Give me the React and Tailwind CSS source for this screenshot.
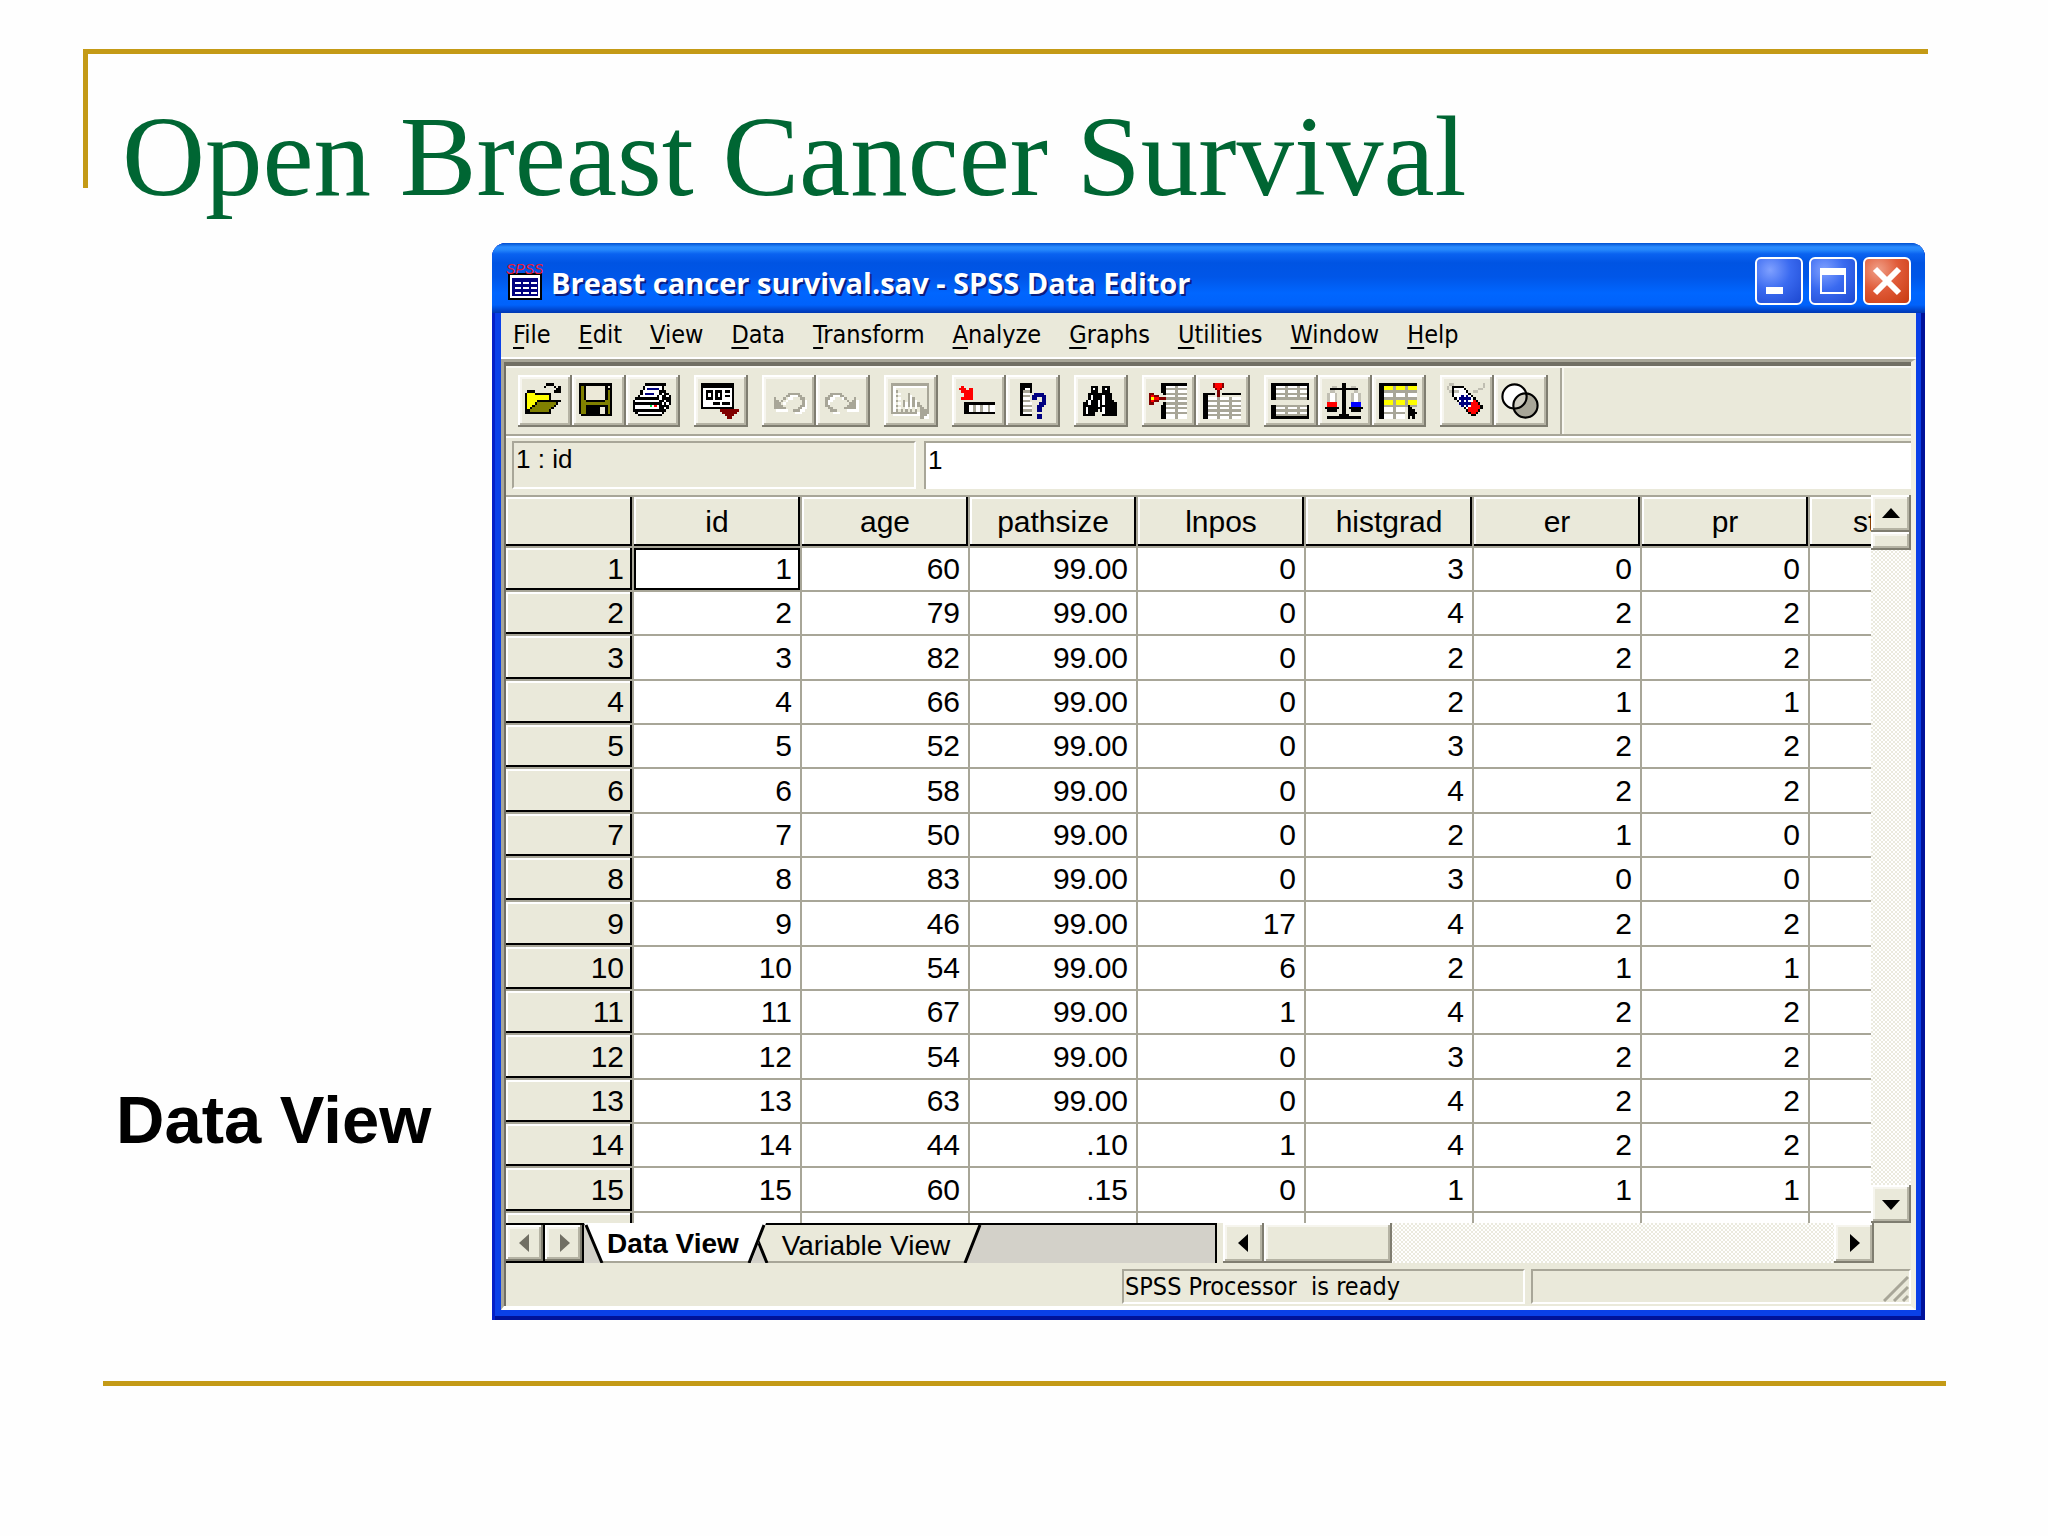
import { clsx } from 'clsx';

const COLORS = {
    K: '#000000',
    W: '#ffffff',
    L: '#ece9d8',
    Y: '#ffff00',
    O: '#808000',
    G: '#a8a698',
    g: '#c0beb2',
    B: '#000080',
    b: '#0000ff',
    R: '#ff0000',
    M: '#800000',
    N: '#00e050',
};

const OPEN = [
    '.........KKK....',
    '........K...K.K.',
    '.............KK.',
    '.KKK........KKK.',
    'KYYYKKKKKKK.....',
    'KYYYYYYYYYK.....',
    'KYYYYYYYYYK.....',
    'KYYYYKKKKKKKKKK.',
    'KYYYKOOOOOOOOK..',
    'KYYKOOOOOOOOK...',
    'KYKOOOOOOOOK....',
    'KKOOOOOOOOK.....',
    'KKKKKKKKKKK.....',
];

const SAVE = [
    'KKKKKKKKKKKKKK',
    'KOKLLLLLLLLKLK',
    'KOKLLLLLLLLKKK',
    'KOKLLLLLLLLKOK',
    'KOKLLLLLLLLKOK',
    'KOKLLLLLLLLKOK',
    'KOKLLLLLLLLKOK',
    'KOOKKKKKKKKOOK',
    'KOOOOOOOOOOOOK',
    'KOOKKKKKKKKKOK',
    'KOOKKKKKKLLKOK',
    'KOOKKKKKKLLKOK',
    'KOOKKKKKKLLKOK',
    '.KKKKKKKKKKKKK',
];

const PRINT = [
    '.....KKKKKKKKK..',
    '....KWWWWWWWK...',
    '....KWBBBBBWK...',
    '...KWWWWWWWKKK..',
    '...KWBBBBWWKWKK.',
    '..KWWWWWWWKWKKWK',
    '.KKKKKKKKKKWKKKK',
    'KWWWWWWWWWWKKWKK',
    'KKKKKKKKKKKKWKWK',
    'KWWWWWWNWRWKKKK.',
    'KWWWWWWWWWWKKWK.',
    'KKKKKKKKKKKKKK..',
    '.KWWWWWWWWWWK...',
    '..KKKKKKKKKK....',
];

const DIALOG = [
    'KKKKKKKKKKKKKK..',
    'KKKKKKKKKKKKKK..',
    'KWWWWWWWWWWWWK..',
    'KWKKKWKKKWKKWK..',
    'KWKWKWKWKWWWWK..',
    'KWKWKWKWKWKKWK..',
    'KWKKKWKKKWWWWK..',
    'KWWWWWWWWWWWWK..',
    'KWWWWKKKWKKKWK..',
    'KWWWWWWWWWWWWK..',
    'KKKKKKKKKKKKKK..',
    '........MMMMMMMM',
    '.........MMMMMM.',
    '..........MMMM..',
    '...........MM...',
];

const UNDO = [
    '................',
    '................',
    '................',
    '................',
    '........GGGGG...',
    '.......GG...GG..',
    '..G...G......GG.',
    '..GG.G........G.',
    '..GGG.........G.',
    '..GGGG.......GG.',
    '..GGGGG.....GG..',
    '..........GGG...',
];

const REDO = UNDO.map((row) => row.padEnd(16, '.').split('').reverse().join(''));

const CHART = [
    'GGGGGGGGGGGGGGGG',
    'G..............G',
    'G..............G',
    'G.G............G',
    'G......G.......G',
    'G.G....G.......G',
    'G......G.G.....G',
    'G.G..G.G.G.....G',
    'G....G.G.G.G...G',
    'G.G..G.G.G.GG..G',
    'G...........GG.G',
    'G.G.G.G.G.G.GGGG',
    'GGGGGGGGGGG.GGGG',
    '............GGG.',
    '............GG..',
];

const GOTO_CASE = [
    '................',
    '.R..............',
    'RRR.RR..........',
    '.RRRRR..........',
    '..RRRR..........',
    '..RRRR..........',
    '.RRRRR..........',
    '................',
    '..KKKKKKKKKKKKK.',
    '..KKWWGWWGWWGWW.',
    '..KKWWGWWGWWGWW.',
    '..KKWWGWWGWWGWW.',
    '..KKKKKKKKKKKKK.',
];

const VARIABLES = [
    '...KKKKK........',
    '...KKKKK........',
    '...KKWWK........',
    '...KGGGK........',
    '...KWWW..BBBB...',
    '...KGGG.BBBBBB..',
    '...KWWW.BB..BB..',
    '...KGGG.....BB..',
    '...KWWWW...BBB..',
    '...KGGGG..BBB...',
    '...KWWWW..BB....',
    '...KGGGG..BB....',
    '...KWWWW........',
    '...KKKKK..BB....',
    '..........BB....',
];

const FIND = [
    '................',
    '....KKK..KKK....',
    '....KWK..KWK....',
    '....KKK..KKK....',
    '...KKKKKKKKKK...',
    '...KWKKKKWKKK...',
    '...KWKKKKWKKK...',
    '..KWKKKWKWKKKK..',
    '.KKWKKKWKWKKKKK.',
    '.KKKKKKWKKKKKKK.',
    '.KWKKKKKKWKKKKK.',
    '.KWKKKK.KWKKKKK.',
    '.KWKKK...WKKKKK.',
    '.KKKKK...KKKKKK.',
];

const INSERT_CASE = [
    '.....KKKKKKKKKKK',
    '.....KKWWWWGWWWW',
    '.....KKGGGGGGGGG',
    '.....KKWWWWGWWWW',
    'MM....KGGGGGGGGG',
    'MRMM...WWWWGWWWW',
    'MYRRMMMGGGGGGGGG',
    'MRMM...WWWWGWWWW',
    'MM....KGGGGGGGGG',
    '.....KKWWWWGWWWW',
    '.....KKGGGGGGGGG',
    '.....KKWWWWGWWWW',
    '.....KKGGGGGGGGG',
    '.....KKWWWWGWWWW',
    '.....KKWWWWGWWWW',
];

const INSERT_VARIABLE = [
    '....MRRRM.......',
    '....MRRRM.......',
    '.....MRM........',
    '......M.........',
    'KKKKK.M.KKKKKKKK',
    'KK....M.........',
    'KKWWWWGWWWWGWWWW',
    'KKGGGGGGGGGGGGGG',
    'KKWWWWGWWWWGWWWW',
    'KKGGGGGGGGGGGGGG',
    'KKWWWWGWWWWGWWWW',
    'KKGGGGGGGGGGGGGG',
    'KKWWWWGWWWWGWWWW',
    'KKGGGGGGGGGGGGGG',
    'KKWWWWGWWWWGWWWW',
];

const SPLIT = [
    'KKKKKKKKKKKKKKKK',
    'KKWWWWGWWWWGWWWK',
    'KKGGGGGGGGGGGGGK',
    'KKWWWWGWWWWGWWWK',
    'KKGGGGGGGGGGGGGK',
    'KKWWWWGWWWWGWWWK',
    'KKGGGGGGGGGGGGGK',
    '................',
    '................',
    'KKGGGGGGGGGGGGGK',
    'KKWWWWGWWWWGWWWK',
    'KKGGGGGGGGGGGGGK',
    'KKWWWWGWWWWGWWWK',
    'KKGGGGGGGGGGGGGK',
    'KKKKKKKKKKKKKKKK',
];

const WEIGHT = [
    '.......KK.......',
    '...gg..KK..gg...',
    '..KKKKKKKKKKKK..',
    '..gg...KK...gg..',
    '.gWWg..KK..gWWg.',
    '.gWWg..KK..gWWg.',
    '.gWWg..KK..gWWg.',
    '.gWWg..KK..gWWg.',
    '.RRRR..KK..bbbb.',
    '.RRRR..KK..bbbb.',
    'KKKKKK.KK.KKKKKK',
    '.KKKK..KK..KKKK.',
    '.......KK.......',
    '......KKKK......',
    '.KKKKKKKKKKKKKK.',
];

const SELECT = [
    'KKKKKKKKKKKKKKKK',
    'KKYYYYGYYYYGYYYY',
    'KKYYYYGYYYYGYYYY',
    'KKGGGGGGGGGGGGGG',
    'KKWWWWGWWWWGWWWW',
    'KKWWWWGWWWWGWWWW',
    'KKGGGGGGGGGGGGGG',
    'KKYYYYGYYYYGYYYY',
    'KKYYYYGYYYYGYYYY',
    'KKGGGGGGGGGGKGGG',
    'KKWWWWGWWWW.KK..',
    'KKWWWWGWWWW.KKK.',
    'KKGGGGGGGGG.KKKK',
    'KKWWWWGWWWW.KKK.',
    'KKWWWWGWWWW.K.K.',
];

const LABELS = [
    '.gg............g',
    'g.KKKKK........g',
    'g.KWWWWK.....gg.',
    '.gKggWWWK..gg...',
    '..KWWWWWWK......',
    '..KWWWBWBWK.....',
    '...KWBBBBBWK....',
    '....KWBWBWWRK...',
    '.....BBBBBRRRK..',
    '......BWBWRRRRK.',
    '.......KWRRRRRK.',
    '........KRRRRK..',
    '.........KRRK...',
    '..........KK....',
];

const Pixels = ({ rows, fill }) =>
    rows.flatMap((row, y) =>
        [...row.matchAll(/([^.])\1*/g)].map((run) => (
            <rect key={`${y}-${run.index}`} x={run.index} y={y} width={run[0].length} height={1} fill={fill || COLORS[run[1]]} />
        ))
    );

const PixelIcon = ({ rows, disabled }) => (
    <svg viewBox="0 0 16 15" className="w-[38px] h-9" shapeRendering="crispEdges" aria-hidden="true">
        {disabled && (
            <g transform="translate(1 1)">
                <Pixels rows={rows} fill="#ffffff" />
            </g>
        )}
        <Pixels rows={rows} />
    </svg>
);

const SetsIcon = () => (
    <svg viewBox="0 0 16 15" className="w-[38px] h-9" aria-hidden="true">
        <defs>
            <clipPath id="first-set">
                <circle cx="5.7" cy="5.6" r="5.1" />
            </clipPath>
        </defs>
        <circle cx="5.7" cy="5.6" r="5.1" fill="#ffffff" />
        <circle cx="10.3" cy="9.4" r="5.1" fill="#a8a698" />
        <circle cx="10.3" cy="9.4" r="5.1" fill="#cfcdc2" clipPath="url(#first-set)" />
        <circle cx="5.7" cy="5.6" r="5.1" fill="none" stroke="#000000" strokeWidth="0.9" />
        <circle cx="10.3" cy="9.4" r="5.1" fill="none" stroke="#000000" strokeWidth="0.9" />
    </svg>
);

const AppIcon = () => (
    <svg viewBox="0 0 37 37" className="w-[37px] h-[37px]" aria-hidden="true">
        <rect x="2" y="10" width="34" height="27" fill="#000000" />
        <rect x="4" y="12" width="30" height="23" fill="#ffffff" />
        <rect x="6" y="15" width="26" height="18" fill="#000080" />
        {[19, 24, 29].map((y) =>
            [9, 17, 25].map((x) => <rect key={`${x}-${y}`} x={x} y={y} width="6" height="2" fill="#ffffff" />)
        )}
        <text x="0" y="11" fontSize="14" fontStyle="italic" fontFamily="Liberation Sans, sans-serif" fill="#f01830">SPSS</text>
    </svg>
);

const TOOLBAR = [
    [
        { label: 'Open File', rows: OPEN },
        { label: 'Save File', rows: SAVE },
        { label: 'Print', rows: PRINT },
    ],
    [{ label: 'Dialog Recall', rows: DIALOG }],
    [
        { label: 'Undo', rows: UNDO, disabled: true },
        { label: 'Redo', rows: REDO, disabled: true },
    ],
    [{ label: 'Goto Chart', rows: CHART, disabled: true }],
    [
        { label: 'Goto Case', rows: GOTO_CASE },
        { label: 'Variables', rows: VARIABLES },
    ],
    [{ label: 'Find', rows: FIND }],
    [
        { label: 'Insert Cases', rows: INSERT_CASE },
        { label: 'Insert Variable', rows: INSERT_VARIABLE },
    ],
    [
        { label: 'Split File', rows: SPLIT },
        { label: 'Weight Cases', rows: WEIGHT },
        { label: 'Select Cases', rows: SELECT },
    ],
    [
        { label: 'Value Labels', rows: LABELS },
        { label: 'Use Sets' },
    ],
];

const MENUS = ['File', 'Edit', 'View', 'Data', 'Transform', 'Analyze', 'Graphs', 'Utilities', 'Window', 'Help'];

const COLUMNS = ['id', 'age', 'pathsize', 'lnpos', 'histgrad', 'er', 'pr', 'status'];

const CASES = [
    [1, 60, '99.00', 0, 3, 0, 0, 0],
    [2, 79, '99.00', 0, 4, 2, 2, 0],
    [3, 82, '99.00', 0, 2, 2, 2, 0],
    [4, 66, '99.00', 0, 2, 1, 1, 0],
    [5, 52, '99.00', 0, 3, 2, 2, 0],
    [6, 58, '99.00', 0, 4, 2, 2, 0],
    [7, 50, '99.00', 0, 2, 1, 0, 0],
    [8, 83, '99.00', 0, 3, 0, 0, 0],
    [9, 46, '99.00', 17, 4, 2, 2, 0],
    [10, 54, '99.00', 6, 2, 1, 1, 0],
    [11, 67, '99.00', 1, 4, 2, 2, 0],
    [12, 54, '99.00', 0, 3, 2, 2, 0],
    [13, 63, '99.00', 0, 4, 2, 2, 0],
    [14, 44, '.10', 1, 4, 2, 2, 0],
    [15, 60, '.15', 0, 1, 1, 1, 0],
    [16, 48, '.20', 0, 1, 2, 2, 0],
];

const raised = 'bg-[#eae9da] shadow-[inset_-2px_-2px_#7f7d70,inset_2px_2px_#ffffff,inset_-4px_-4px_#b5b3a4,inset_4px_4px_#f6f5ee]';
const headerCell = 'bg-[#eae9da] border-r-2 border-b-2 border-[#a8a698] font-normal shadow-[inset_-2px_-2px_#000000,inset_2px_2px_#ffffff]';
const sunken = 'border-2 border-t-[#a8a698] border-l-[#a8a698] border-b-white border-r-white';
const track = 'bg-[repeating-conic-gradient(#ffffff_0_25%,#ebeade_0_50%)] bg-[length:4px_4px]';
const captionButton = 'w-12 h-12 rounded-md border-2 border-white flex items-center justify-center';

const TitleBar = () => (
    <div className="h-[70px] rounded-t-[14px] pt-[6px] pl-[14px] pr-[14px] flex items-center gap-2 bg-[linear-gradient(to_bottom,#0050d0_0px,#2b8cff_4px,#2486fb_7px,#0a62f0_11px,#0054e3_20px,#0056e8_34px,#0066ff_50px,#0062fb_62px,#0040c4_68px,#0038b0_70px)]">
        <AppIcon />
        <h2 className="flex-1 pt-1 font-['Open_Sans',sans-serif] font-bold text-[29px] leading-10 text-white [text-shadow:2px_2px_#0a1e80]">
            Breast cancer survival.sav - SPSS Data Editor
        </h2>
        <div className="flex gap-[6px]">
            <button aria-label="Minimize" className={clsx(captionButton, 'bg-[radial-gradient(circle_at_30%_25%,#7fa0ff,#3a6af0_45%,#1c48d0)]')}>
                <svg viewBox="0 0 44 44" className="w-11 h-11"><rect x="9" y="28" width="17" height="7" fill="#ffffff" /></svg>
            </button>
            <button aria-label="Maximize" className={clsx(captionButton, 'bg-[radial-gradient(circle_at_30%_25%,#7fa0ff,#3a6af0_45%,#1c48d0)]')}>
                <svg viewBox="0 0 44 44" className="w-11 h-11">
                    <path d="M9 9h26v26H9zM11 16v17h22V16z" fill="#ffffff" fillRule="evenodd" />
                </svg>
            </button>
            <button aria-label="Close" className={clsx(captionButton, 'bg-[radial-gradient(circle_at_30%_25%,#f0a088,#e05a38_45%,#c83a10)]')}>
                <svg viewBox="0 0 44 44" className="w-11 h-11"><path d="M10 10L34 34M34 10L10 34" stroke="#ffffff" strokeWidth="6" /></svg>
            </button>
        </div>
    </div>
);

const MenuBar = () => (
    <nav className="h-11 pl-[5px] flex items-center">
        {MENUS.map((menu) => (
            <button key={menu} className="px-[14px] first:pl-[7px] leading-8">
                <span className="underline decoration-2 underline-offset-4">{menu[0]}</span>
                {menu.slice(1)}
            </button>
        ))}
    </nav>
);

const Toolbar = () => (
    <div className="flex border-t-2 border-t-[#f8f7f0] border-b-2 border-b-[#a8a698]">
        <div className="flex gap-[14px] pl-3 pr-3 py-[7px] border-r-2 border-[#a8a698]">
            {TOOLBAR.map((group) => (
                <div key={group[0].label} className="flex">
                    {group.map(({ label, rows, disabled }) => (
                        <button key={label} aria-label={label} disabled={disabled} className={clsx('w-[54px] h-[52px] p-[7px]', raised)}>
                            {rows ? <PixelIcon rows={rows} disabled={disabled} /> : <SetsIcon />}
                        </button>
                    ))}
                </div>
            ))}
        </div>
        <div className="flex-1 border-l-2 border-[#f8f7f0]" />
    </div>
);

const CellEditor = () => (
    <div className="flex gap-2 pt-[3px] pb-[6px] pl-[6px] border-t-2 border-white font-['Liberation_Sans',sans-serif] text-[26px]">
        <input aria-label="Current cell" readOnly value="1 : id" className={clsx('w-[404px] h-12 px-[2px] pb-3 bg-transparent', sunken)} />
        <input aria-label="Cell value" defaultValue="1" className="flex-1 h-12 px-[2px] pb-3 bg-white border-t-2 border-l-2 border-[#a8a698]" />
    </div>
);

const DataGrid = () => (
    <div className="flex-1 h-[728px] overflow-hidden border-t-2 border-[#a8a698]">
        <table className="w-[1472px] table-fixed border-separate border-spacing-0 bg-white font-['Liberation_Sans',sans-serif] text-[30px] leading-10">
            <thead>
                <tr className="h-[51px]">
                    <th className={clsx('w-32', headerCell)} />
                    {COLUMNS.map((name) => (
                        <th key={name} scope="col" className={headerCell}>{name}</th>
                    ))}
                </tr>
            </thead>
            <tbody>
                {CASES.map((values) => (
                    <tr key={values[0]} className="h-11 nth-[3n]:h-[45px]">
                        <th scope="row" className={clsx('text-right pr-2', headerCell)}>{values[0]}</th>
                        {values.map((value, i) => (
                            <td
                                key={COLUMNS[i]}
                                className={clsx(
                                    'text-right pr-2 border-r-2 border-b-2 border-[#a8a698]',
                                    values[0] === 1 && i === 0 && 'shadow-[inset_0_0_0_2px_#000000]'
                                )}
                            >
                                {value}
                            </td>
                        ))}
                    </tr>
                ))}
            </tbody>
        </table>
    </div>
);

const Arrow = ({ points, fill = '#000000' }) => (
    <svg viewBox="0 0 24 24" className="w-6 h-6" aria-hidden="true">
        <polygon points={points} fill={fill} />
    </svg>
);

const VerticalScroll = () => (
    <div className={clsx('w-10 flex flex-col', track)}>
        <button aria-label="Scroll up" className={clsx('h-[37px] flex items-center justify-center', raised)}>
            <Arrow points="12,6 21,16 3,16" />
        </button>
        <div className={clsx('h-[18px]', raised)} />
        <div className="flex-1" />
        <button aria-label="Scroll down" className={clsx('h-[38px] flex items-center justify-center', raised)}>
            <Arrow points="3,8 21,8 12,18" />
        </button>
    </div>
);

const SheetTabs = () => (
    <div className="w-[711px] flex bg-[#d3d1c9] border-t-2 border-r-2 border-black">
        <button aria-label="Previous sheet" className={clsx('w-[39px] flex items-center justify-center border-r-2 border-b-2 border-black', raised)}>
            <Arrow points="16,3 16,21 6,12" fill="#716f64" />
        </button>
        <button aria-label="Next sheet" className={clsx('w-[39px] flex items-center justify-center border-r-2 border-b-2 border-black', raised)}>
            <Arrow points="8,3 8,21 18,12" fill="#716f64" />
        </button>
        <button className="relative z-10 w-[182px] h-10 -mt-[2px] pr-1 font-bold">
            <svg viewBox="0 0 182 40" className="absolute inset-0 w-full h-full" aria-hidden="true">
                <polygon points="0,0 182,0 167,40 17,40" fill="#ffffff" />
                <path d="M17 39H167" stroke="#a8a698" strokeWidth="2" />
                <path d="M2 2L18 40M165 40L180 2" stroke="#000000" strokeWidth="3" fill="none" />
            </svg>
            <span className="relative">Data View</span>
        </button>
        <button className="relative w-[228px] h-[38px] -ml-3 pr-1">
            <svg viewBox="0 0 228 38" className="absolute inset-0 w-full h-full" aria-hidden="true">
                <polygon points="10,0 226,0 211,38 12,38 3,18" fill="#eae9da" />
                <path d="M12 37H211" stroke="#a8a698" strokeWidth="2" />
                <path d="M4 16L13 38M211 38L226 0" stroke="#000000" strokeWidth="3" fill="none" />
            </svg>
            <span className="relative">Variable View</span>
        </button>
    </div>
);

const HorizontalScroll = () => (
    <div className={clsx('flex-1 flex ml-[6px]', track)}>
        <button aria-label="Scroll left" className={clsx('w-[41px] flex items-center justify-center', raised)}>
            <Arrow points="16,3 16,21 6,12" />
        </button>
        <div className={clsx('w-32', raised)} />
        <div className="flex-1" />
        <button aria-label="Scroll right" className={clsx('w-10 flex items-center justify-center', raised)}>
            <Arrow points="8,3 8,21 18,12" />
        </button>
    </div>
);

const StatusBar = () => (
    <div className="flex justify-end gap-[6px] pt-[6px] pb-[2px]">
        <p className={clsx('w-[403px] h-[35px] pl-[1px] leading-8 whitespace-pre', sunken)}>SPSS Processor  is ready</p>
        <div className={clsx('w-[380px] h-[35px] flex justify-end items-end', sunken)}>
            <svg viewBox="0 0 26 26" className="w-[26px] h-[26px]" aria-hidden="true">
                <path d="M1 25L25 1M11 25L25 11M20 25L25 20" stroke="#a8a698" strokeWidth="3" />
            </svg>
        </div>
    </div>
);

const EditorWindow = () => (
    <section className="flex-1 min-w-0 rounded-t-[14px] bg-[#0a40e8] shadow-[inset_3px_0_#0420c8,inset_-4px_-4px_#00129a]">
        <TitleBar />
        <div className="mx-[9px] pb-[10px] font-['DejaVu_Sans_Condensed','DejaVu_Sans',sans-serif] text-[25px] text-black">
            <div className="bg-[#eae9da]">
                <MenuBar />
                <div className="border-t-2 border-white">
                    <div className="border-t-[3px] border-l-[3px] border-[#a8a698] border-r-[5px] border-r-[#f1efe2] border-b-4 border-b-white">
                        <div className="border-t-[4px] border-l-2 border-[#716f64]">
                            <Toolbar />
                            <CellEditor />
                            <div className="flex">
                                <DataGrid />
                                <VerticalScroll />
                            </div>
                            <div className="flex h-10 pr-[37px] font-['Liberation_Sans',sans-serif] text-[28px]">
                                <SheetTabs />
                                <HorizontalScroll />
                            </div>
                            <StatusBar />
                        </div>
                    </div>
                </div>
            </div>
        </div>
    </section>
);

const App = () => (
    <main className="min-h-screen bg-[#fefefe] pt-[49px]">
        <header className="ml-[83px] mr-[120px] h-[139px] pl-[34px] pt-[53px] border-t-[5px] border-l-[5px] border-[#c49a16]">
            <h1 className="font-['Liberation_Serif',serif] text-[115px] leading-[100px] text-[#006633] whitespace-nowrap">
                Open Breast Cancer Survival
            </h1>
        </header>
        <div className="mt-[55px] ml-[116px] mr-[123px] flex">
            <p className="w-[376px] shrink-0 self-end pb-[160px] font-['Liberation_Sans',sans-serif] font-bold text-[67px] leading-[80px] text-black">
                Data View
            </p>
            <EditorWindow />
        </div>
        <hr className="mt-[61px] ml-[103px] mr-[102px] border-t-[5px] border-[#c49a16]" />
    </main>
);

export default App;
